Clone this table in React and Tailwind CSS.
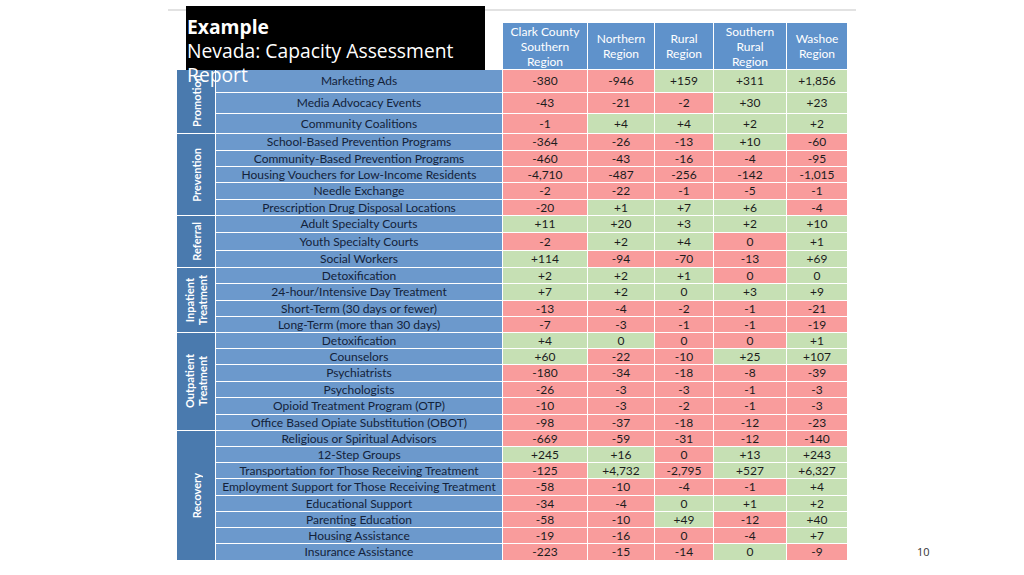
import React from "react";

const sections = [
  {
    name: ["Promotion"],
    rows: [
      ["Marketing Ads", "h-[22px]", ["-380", "-946", "+159", "+311", "+1,856"], "RRGGG"],
      ["Media Advocacy Events", "h-[20px]", ["-43", "-21", "-2", "+30", "+23"], "RRRGG"],
      ["Community Coalitions", "h-[19px]", ["-1", "+4", "+4", "+2", "+2"], "RGGGG"],
    ],
  },
  {
    name: ["Prevention"],
    rows: [
      ["School-Based Prevention Programs", "h-[16px]", ["-364", "-26", "-13", "+10", "-60"], "RRRGR"],
      ["Community-Based Prevention Programs", "h-[15px]", ["-460", "-43", "-16", "-4", "-95"], "RRRRR"],
      ["Housing Vouchers for Low-Income Residents", "h-[15px]", ["-4,710", "-487", "-256", "-142", "-1,015"], "RRRRR"],
      ["Needle Exchange", "h-[16px]", ["-2", "-22", "-1", "-5", "-1"], "RRRRR"],
      ["Prescription Drug Disposal Locations", "h-[15px]", ["-20", "+1", "+7", "+6", "-4"], "RGGGR"],
    ],
  },
  {
    name: ["Referral"],
    rows: [
      ["Adult Specialty Courts", "h-[16px]", ["+11", "+20", "+3", "+2", "+10"], "GGGGG"],
      ["Youth Specialty Courts", "h-[17px]", ["-2", "+2", "+4", "0", "+1"], "RGGRG"],
      ["Social Workers", "h-[16px]", ["+114", "-94", "-70", "-13", "+69"], "GRRRG"],
    ],
  },
  {
    name: ["Inpatient", "Treatment"],
    rows: [
      ["Detoxification", "h-[15px]", ["+2", "+2", "+1", "0", "0"], "GGGRG"],
      ["24-hour/Intensive Day Treatment", "h-[16px]", ["+7", "+2", "0", "+3", "+9"], "GGGGG"],
      ["Short-Term (30 days or fewer)", "h-[15px]", ["-13", "-4", "-2", "-1", "-21"], "RRRRR"],
      ["Long-Term (more than 30 days)", "h-[15px]", ["-7", "-3", "-1", "-1", "-19"], "RRRRR"],
    ],
  },
  {
    name: ["Outpatient", "Treatment"],
    rows: [
      ["Detoxification", "h-[15px]", ["+4", "0", "0", "0", "+1"], "GGRRG"],
      ["Counselors", "h-[15px]", ["+60", "-22", "-10", "+25", "+107"], "GRRGG"],
      ["Psychiatrists", "h-[16px]", ["-180", "-34", "-18", "-8", "-39"], "RRRRR"],
      ["Psychologists", "h-[15px]", ["-26", "-3", "-3", "-1", "-3"], "RRRRR"],
      ["Opioid Treatment Program (OTP)", "h-[16px]", ["-10", "-3", "-2", "-1", "-3"], "RRRRR"],
      ["Office Based Opiate Substitution (OBOT)", "h-[15px]", ["-98", "-37", "-18", "-12", "-23"], "RRRRR"],
    ],
  },
  {
    name: ["Recovery"],
    rows: [
      ["Religious or Spiritual Advisors", "h-[15px]", ["-669", "-59", "-31", "-12", "-140"], "RRRRR"],
      ["12-Step Groups", "h-[15px]", ["+245", "+16", "0", "+13", "+243"], "GGRGG"],
      ["Transportation for Those Receiving Treatment", "h-[15px]", ["-125", "+4,732", "-2,795", "+527", "+6,327"], "RGRGG"],
      ["Employment Support for Those Receiving Treatment", "h-[16px]", ["-58", "-10", "-4", "-1", "+4"], "RRRRG"],
      ["Educational Support", "h-[15px]", ["-34", "-4", "0", "+1", "+2"], "RRGGG"],
      ["Parenting Education", "h-[15px]", ["-58", "-10", "+49", "-12", "+40"], "RRGRG"],
      ["Housing Assistance", "h-[15px]", ["-19", "-16", "0", "-4", "+7"], "RRRRG"],
      ["Insurance Assistance", "h-[16px]", ["-223", "-15", "-14", "0", "-9"], "RRRGR"],
    ],
  },
];

const headers = [
  ["Clark County", "Southern", "Region"],
  ["Northern", "Region"],
  ["Rural", "Region"],
  ["Southern", "Rural", "Region"],
  ["Washoe", "Region"],
];

const colWidths = ["w-[84px]", "w-[66px]", "w-[58px]", "w-[72px]", "w-[60px]"];

const App = () => {
  return (
    <div className="relative w-[1024px] h-[575px] bg-white overflow-hidden font-['Lato',sans-serif]">
      {/* top rule */}
      <div className="ml-[168px] pt-[9px] w-[688px]">
        <div className="h-[2px] bg-[#e2e2e2]" />
      </div>

      {/* table */}
      <div className="ml-[177px] mt-[12px] w-[670px]">
        {/* header */}
        <div className="flex gap-px">
          <div className="w-[325px] shrink-0" />
          {headers.map((h, i) => (
            <div
              key={i}
              className={`${colWidths[i]} shrink-0 h-[46px] bg-[#5f92cb] text-white text-[12px] leading-[15px] flex flex-col items-center justify-center text-center`}
            >
              {h.map((l) => (
                <span key={l}>{l}</span>
              ))}
            </div>
          ))}
        </div>

        {/* body */}
        <div className="flex flex-col gap-px mt-px bg-white">
          {sections.map((s) => (
            <div key={s.name.join()} className="flex gap-px">
              <div className="w-[38px] shrink-0 bg-[#4a7aae] flex items-center justify-center">
                <div className="[writing-mode:vertical-rl] rotate-180 text-white font-bold text-[11px] leading-[13px] text-center">
                  {s.name.map((n) => (
                    <div key={n}>{n}</div>
                  ))}
                </div>
              </div>
              <div className="flex flex-col gap-px">
                {s.rows.map(([label, h, vals, colors]) => (
                  <div key={label} className={`flex gap-px ${h}`}>
                    <div className="w-[286px] shrink-0 bg-[#6c99cc] text-[#13223a] text-[12px] flex items-center justify-center whitespace-nowrap">
                      {label}
                    </div>
                    {vals.map((v, i) => (
                      <div
                        key={i}
                        className={`${colWidths[i]} shrink-0 ${
                          colors[i] === "R" ? "bg-[#f99c9c]" : "bg-[#c6e0b4]"
                        } text-[#1c1c1c] text-[12px] flex items-center justify-center`}
                      >
                        {v}
                      </div>
                    ))}
                  </div>
                ))}
              </div>
            </div>
          ))}
        </div>
      </div>

      {/* title overlay */}
      <div className="absolute left-[186px] top-[6px] w-[299px] h-[64px] bg-black pl-px pt-[9px] text-white font-['Open_Sans',sans-serif] text-[19.3px] leading-[24px]">
        <div className="font-bold">Example</div>
        <div>Nevada: Capacity Assessment Report</div>
      </div>

      {/* slide number */}
      <div className="absolute left-[917px] top-[544px] text-[11px] text-[#333] font-['Open_Sans',sans-serif]">
        10
      </div>
    </div>
  );
};

export default App;
